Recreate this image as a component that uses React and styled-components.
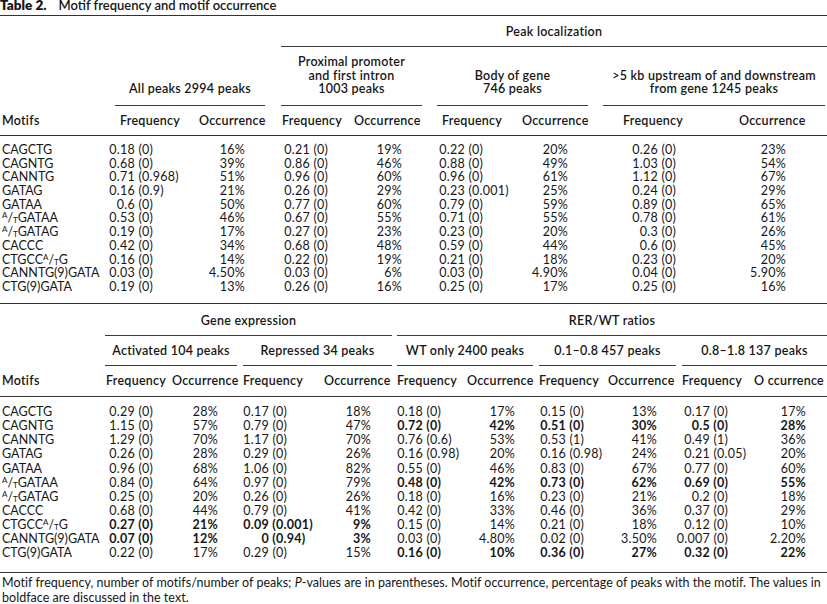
import React from "react";
import styled, { createGlobalStyle } from "styled-components";

const GlobalStyle = createGlobalStyle`
  html, body { margin: 0; padding: 0; background: #fff; }
  body {
    font-family: Lato, "Open Sans", "Liberation Sans", sans-serif;
    color: #161616;
  }
`;

const Page = styled.div`
  width: 827px;
  font-size: 12.5px;
  overflow: hidden;
`;

const Caption = styled.div`
  box-sizing: border-box;
  height: 16px;
  line-height: 10px;
  font-size: 13px;
  border-bottom: 1px solid #333;
  white-space: nowrap;
  b { font-size: 13.5px; font-weight: 800; margin-right: 12px; }
  span { font-weight: 600; }
`;

const Row = styled.div`
  box-sizing: border-box;
  display: grid;
  grid-template-columns: ${(p) => p.$cols};
  height: ${(p) => p.$h}px;
  letter-spacing: 0.25px;
  ${(p) => (p.$rule ? "border-bottom: 1px solid #333;" : "")}
`;

const Group = styled.div`
  grid-column: span ${(p) => p.$span};
  display: flex;
  align-items: flex-end;
  padding: 0 ${(p) => p.$pr || 0}px 0 ${(p) => p.$pl || 0}px;
`;

const GroupLabel = styled.div`
  flex: 1;
  text-align: center;
  font-weight: 600;
  line-height: ${(p) => p.$lh}px;
  padding-bottom: ${(p) => p.$pb}px;
  border-bottom: 1px solid #3a3a3a;
  white-space: nowrap;
`;

const HeadCell = styled.div`
  font-weight: 600;
  line-height: ${(p) => p.$lh}px;
  padding-left: ${(p) => p.$pl}px;
  white-space: nowrap;
`;

const Body = styled.div`
  box-sizing: border-box;
  height: ${(p) => p.$h}px;
  padding-top: ${(p) => p.$pt}px;
  border-bottom: 1px solid #333;
`;

const DataRow = styled.div`
  display: grid;
  grid-template-columns: ${(p) => p.$cols};
  line-height: ${(p) => p.$lh}px;
  height: ${(p) => p.$lh}px;
  letter-spacing: 0.25px;
  white-space: nowrap;
`;

const Motif = styled.div`
  padding-left: 2px;
  letter-spacing: 0;
`;

const Freq = styled.div`
  padding-left: ${(p) => p.$pl}px;
  font-weight: ${(p) => (p.$bold ? 700 : 400)};
`;

const Lead = styled.span`
  display: inline-flex;
  justify-content: flex-end;
  width: 29px;
`;

const Occ = styled.div`
  text-align: right;
  padding-right: ${(p) => p.$pr}px;
  font-weight: ${(p) => (p.$bold ? 700 : 400)};
`;

const Sup = styled.sup`
  font-size: 8px;
  line-height: 0;
  vertical-align: 4px;
`;

const Sub = styled.sub`
  font-size: 8px;
  line-height: 0;
  vertical-align: -1px;
`;

const Note = styled.div`
  padding: 2px 0 0 2px;
  line-height: 15px;
  letter-spacing: 0.03px;
  white-space: nowrap;
  i { font-style: italic; }
`;

const at = (
  <>
    <Sup>A</Sup>/<Sub>T</Sub>
  </>
);

const motifs = [
  "CAGCTG",
  "CAGNTG",
  "CANNTG",
  "GATAG",
  "GATAA",
  <>{at}GATAA</>,
  <>{at}GATAG</>,
  "CACCC",
  <>CTGCC{at}G</>,
  "CANNTG(9)GATA",
  "CTG(9)GATA",
];

const topCols = [
  { w: 104, hp: 2 },
  { w: 86, t: "f", dp: 2, hp: 16 },
  { w: 89, t: "o", dp: 34, hp: 9 },
  { w: 71, t: "f", dp: 2, hp: 3 },
  { w: 84, t: "o", dp: 32, hp: 4 },
  { w: 84, t: "f", dp: 2, hp: 8 },
  { w: 82, t: "o", dp: 32, hp: 4 },
  { w: 120, t: "f", dp: 29, hp: 23 },
  { w: 107, t: "o", dp: 41, hp: 19 },
];

const botCols = [
  { w: 100, hp: 2 },
  { w: 68, t: "f", dp: 6, hp: 6 },
  { w: 72, t: "o", dp: 22, hp: 4 },
  { w: 78, t: "f", dp: 0, hp: 3 },
  { w: 76, t: "o", dp: 23, hp: 6 },
  { w: 68, t: "f", dp: 0, hp: 3 },
  { w: 74, t: "o", dp: 21, hp: 5 },
  { w: 68, t: "f", dp: 1, hp: 3 },
  { w: 75, t: "o", dp: 22, hp: 4 },
  { w: 71, t: "f", dp: 2, hp: 3 },
  { w: 77, t: "o", dp: 21, hp: 4 },
];

// values marked with * are set in boldface
const topData = [
  ["0.18 (0)", "16%", "0.21 (0)", "19%", "0.22 (0)", "20%", "0.26 (0)", "23%"],
  ["0.68 (0)", "39%", "0.86 (0)", "46%", "0.88 (0)", "49%", "1.03 (0)", "54%"],
  ["0.71 (0.968)", "51%", "0.96 (0)", "60%", "0.96 (0)", "61%", "1.12 (0)", "67%"],
  ["0.16 (0.9)", "21%", "0.26 (0)", "29%", "0.23 (0.001)", "25%", "0.24 (0)", "29%"],
  ["0.6 (0)", "50%", "0.77 (0)", "60%", "0.79 (0)", "59%", "0.89 (0)", "65%"],
  ["0.53 (0)", "46%", "0.67 (0)", "55%", "0.71 (0)", "55%", "0.78 (0)", "61%"],
  ["0.19 (0)", "17%", "0.27 (0)", "23%", "0.23 (0)", "20%", "0.3 (0)", "26%"],
  ["0.42 (0)", "34%", "0.68 (0)", "48%", "0.59 (0)", "44%", "0.6 (0)", "45%"],
  ["0.16 (0)", "14%", "0.22 (0)", "19%", "0.21 (0)", "18%", "0.23 (0)", "20%"],
  ["0.03 (0)", "4.50%", "0.03 (0)", "6%", "0.03 (0)", "4.90%", "0.04 (0)", "5.90%"],
  ["0.19 (0)", "13%", "0.26 (0)", "16%", "0.25 (0)", "17%", "0.25 (0)", "16%"],
];

const botData = [
  ["0.29 (0)", "28%", "0.17 (0)", "18%", "0.18 (0)", "17%", "0.15 (0)", "13%", "0.17 (0)", "17%"],
  ["1.15 (0)", "57%", "0.79 (0)", "47%", "*0.72 (0)", "*42%", "*0.51 (0)", "*30%", "*0.5 (0)", "*28%"],
  ["1.29 (0)", "70%", "1.17 (0)", "70%", "0.76 (0.6)", "53%", "0.53 (1)", "41%", "0.49 (1)", "36%"],
  ["0.26 (0)", "28%", "0.29 (0)", "26%", "0.16 (0.98)", "20%", "0.16 (0.98)", "24%", "0.21 (0.05)", "20%"],
  ["0.96 (0)", "68%", "1.06 (0)", "82%", "0.55 (0)", "46%", "0.83 (0)", "67%", "0.77 (0)", "60%"],
  ["0.84 (0)", "64%", "0.97 (0)", "79%", "*0.48 (0)", "*42%", "*0.73 (0)", "*62%", "*0.69 (0)", "*55%"],
  ["0.25 (0)", "20%", "0.26 (0)", "26%", "0.18 (0)", "16%", "0.23 (0)", "21%", "0.2 (0)", "18%"],
  ["0.68 (0)", "44%", "0.79 (0)", "41%", "0.42 (0)", "33%", "0.46 (0)", "36%", "0.37 (0)", "29%"],
  ["*0.27 (0)", "*21%", "*0.09 (0.001)", "*9%", "0.15 (0)", "14%", "0.21 (0)", "18%", "0.12 (0)", "10%"],
  ["*0.07 (0)", "*12%", "*0 (0.94)", "*3%", "0.03 (0)", "4.80%", "0.02 (0)", "3.50%", "0.007 (0)", "2.20%"],
  ["0.22 (0)", "17%", "0.29 (0)", "15%", "*0.16 (0)", "*10%", "*0.36 (0)", "*27%", "*0.32 (0)", "*22%"],
];

const template = (cols) => cols.map((c) => `${c.w}px`).join(" ");

function Cell({ col, value }) {
  const bold = value.startsWith("*");
  const text = bold ? value.slice(1) : value;
  if (col.t === "o") {
    return (
      <Occ $pr={col.dp} $bold={bold}>
        {text}
      </Occ>
    );
  }
  const i = text.indexOf(" (");
  return (
    <Freq $pl={col.dp} $bold={bold}>
      <Lead>{text.slice(0, i)}</Lead>
      {text.slice(i)}
    </Freq>
  );
}

function GroupRow({ cols, h, groups, lh, pb }) {
  return (
    <Row $cols={template(cols)} $h={h}>
      {groups.map((g, i) =>
        g.label ? (
          <Group key={i} $span={g.span} $pl={g.pl} $pr={g.pr}>
            <GroupLabel $lh={lh} $pb={pb}>
              {g.label}
            </GroupLabel>
          </Group>
        ) : (
          <Group key={i} $span={g.span} />
        )
      )}
    </Row>
  );
}

function ColumnHeads({ cols, h, lastLabel = "Occurrence" }) {
  return (
    <Row $cols={template(cols)} $h={h} $rule>
      {cols.map((c, i) => (
        <HeadCell key={i} $pl={c.hp} $lh={h - 1}>
          {i === 0
            ? "Motifs"
            : c.t === "f"
            ? "Frequency"
            : i === cols.length - 1
            ? lastLabel
            : "Occurrence"}
        </HeadCell>
      ))}
    </Row>
  );
}

function DataBody({ cols, data, h, pt, lh }) {
  return (
    <Body $h={h} $pt={pt}>
      {data.map((row, r) => (
        <DataRow key={r} $cols={template(cols)} $lh={lh}>
          <Motif>{motifs[r]}</Motif>
          {row.map((v, i) => (
            <Cell key={i} col={cols[i + 1]} value={v} />
          ))}
        </DataRow>
      ))}
    </Body>
  );
}

export default function App() {
  return (
    <Page>
      <GlobalStyle />
      <Caption>
        <b>Table 2.</b>
        <span>Motif frequency and motif occurrence</span>
      </Caption>

      <GroupRow
        cols={topCols}
        h={31}
        lh={14}
        pb={7}
        groups={[{ span: 3 }, { span: 6, label: "Peak localization", pl: 2 }]}
      />
      <GroupRow
        cols={topCols}
        h={59}
        lh={13.6}
        pb={9}
        groups={[
          { span: 1 },
          { span: 2, label: "All peaks 2994 peaks", pl: 11, pr: 14 },
          {
            span: 2,
            label: (
              <>
                Proximal promoter
                <br />
                and first intron
                <br />
                1003 peaks
              </>
            ),
            pl: 2,
            pr: 12,
          },
          {
            span: 2,
            label: (
              <>
                Body of gene
                <br />
                746 peaks
              </>
            ),
            pl: 3,
            pr: 12,
          },
          {
            span: 2,
            label: (
              <>
                &gt;5 kb upstream of and downstream
                <br />
                from gene 1245 peaks
              </>
            ),
            pl: 3,
            pr: 2,
          },
        ]}
      />
      <ColumnHeads cols={topCols} h={30} />
      <DataBody cols={topCols} data={topData} h={168} pt={7} lh={13.7} />

      <GroupRow
        cols={botCols}
        h={32}
        lh={14}
        pb={7}
        groups={[
          { span: 1 },
          { span: 4, label: "Gene expression", pl: 5, pr: 2 },
          { span: 6, label: "RER/WT ratios", pl: 3 },
        ]}
      />
      <GroupRow
        cols={botCols}
        h={30}
        lh={14}
        pb={7}
        groups={[
          { span: 1 },
          { span: 2, label: "Activated 104 peaks", pl: 5, pr: 3 },
          { span: 2, label: "Repressed 34 peaks", pl: 3, pr: 2 },
          { span: 2, label: "WT only 2400 peaks", pl: 3, pr: 3 },
          { span: 2, label: "0.1–0.8 457 peaks", pl: 3, pr: 3 },
          { span: 2, label: "0.8–1.8 137 peaks", pl: 3 },
        ]}
      />
      <ColumnHeads cols={botCols} h={31} lastLabel="O ccurrence" />
      <DataBody cols={botCols} data={botData} h={176} pt={8} lh={14.15} />

      <Note>
        Motif frequency, number of motifs/number of peaks; <i>P</i>-values are in parentheses. Motif occurrence,
        percentage of peaks with the motif. The values in
        <br />
        boldface are discussed in the text.
      </Note>
    </Page>
  );
}
